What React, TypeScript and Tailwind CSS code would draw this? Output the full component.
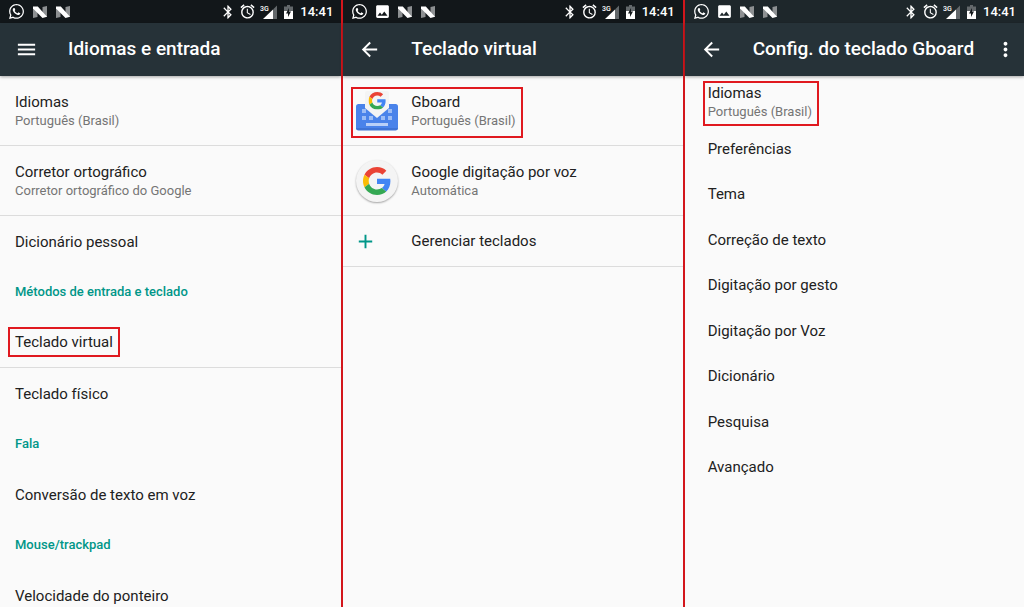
import type { ReactNode } from 'react';
import { clsx } from 'clsx';
import { FaWhatsapp } from 'react-icons/fa';
import { MdAdd, MdAlarm, MdArrowBack, MdBluetooth, MdImage, MdMenu, MdMoreVert } from 'react-icons/md';

const keyboardSettings = [
  'Preferências',
  'Tema',
  'Correção de texto',
  'Digitação por gesto',
  'Digitação por Voz',
  'Dicionário',
  'Pesquisa',
  'Avançado',
];

function NougatIcon() {
  return (
    <svg viewBox="0 0 14 12" className="h-3 w-3.5" aria-hidden="true">
      <path d="M0 1h4.500v10L0 12z" fill="#8d9092" />
      <path d="M9.500 1 14 0v11H9.500z" fill="#8d9092" />
      <path d="M0 .500h4.800L14 10.800 9.500 12 0 2.500z" fill="#fff" />
    </svg>
  );
}

function SignalIcon() {
  return (
    <svg viewBox="0 0 17 14" className="h-3.5 w-[17px]" aria-hidden="true">
      <path d="M17 .500V14h-4V4.500z" fill="#63686b" />
      <path d="M3 14 13 4.500V14z" fill="#fff" />
      <text x="0" y="6" fill="#fff" fontSize="7" fontWeight="500" fontFamily="Roboto, sans-serif">
        3G
      </text>
    </svg>
  );
}

function BatteryIcon() {
  return (
    <svg viewBox="0 0 9 14" className="h-3.5 w-[9px]" aria-hidden="true">
      <path d="M3 0h3v1.500h3V6H0V1.500h3z" fill="#63686b" />
      <path d="M0 6h9v8H0z" fill="#fff" />
      <path d="M5 3 2 8.500h2V12l3-5.500H5z" fill="#12171a" />
    </svg>
  );
}

function GoogleG({ className }: { className?: string }) {
  return (
    <svg viewBox="0 0 48 48" className={className} aria-hidden="true">
      <path fill="#EA4335" d="M24 9.500c3.540 0 6.710 1.220 9.210 3.600l6.850-6.850C35.900 2.380 30.470 0 24 0 14.620 0 6.510 5.380 2.560 13.220l7.980 6.190C12.430 13.720 17.740 9.500 24 9.500z" />
      <path fill="#4285F4" d="M46.980 24.550c0-1.570-.150-3.090-.380-4.550H24v9.020h12.940c-.580 2.960-2.260 5.480-4.780 7.180l7.730 6c4.510-4.180 7.090-10.360 7.090-17.650z" />
      <path fill="#FBBC05" d="M10.530 28.590c-.480-1.450-.760-2.990-.760-4.590s.270-3.140.760-4.590l-7.980-6.190C.920 16.460 0 20.120 0 24c0 3.880.920 7.540 2.560 10.780l7.970-6.190z" />
      <path fill="#34A853" d="M24 48c6.480 0 11.930-2.130 15.890-5.810l-7.730-6c-2.150 1.450-4.920 2.300-8.160 2.300-6.260 0-11.570-4.220-13.470-9.910l-7.980 6.190C6.510 42.620 14.620 48 24 48z" />
    </svg>
  );
}

function GboardIcon() {
  return (
    <svg viewBox="0 0 42 40" className="h-10 w-[42px] shrink-0" aria-hidden="true">
      <rect y="13" width="42" height="26" rx="2.500" fill="#4a83ea" />
      <path d="M0 37v.2A2.500 2.500 0 0 0 2.500 39.500h37a2.500 2.500 0 0 0 2.500-2.300V37z" fill="#3f74d6" />
      <g fill="#9dbdf5">
        <path d="M6 18h4v4H6zM32 18h4v4h-4z" />
        <path d="M6 25h4v4H6zM13 25h4v4h-4zM25 25h4v4h-4zM32 25h4v4h-4z" />
        <path d="M10 32h22v3H10z" fill="#b9d0f8" />
      </g>
      <path d="M9 2a2 2 0 0 1 2-2h20a2 2 0 0 1 2 2v15L21 27 9 17z" fill="#f4f4f4" />
      <svg x="12.500" y="1" width="17.500" height="17.500" viewBox="0 0 48 48">
        <GoogleG />
      </svg>
    </svg>
  );
}

function StatusBar({ screenshot = false, light = false }: { screenshot?: boolean; light?: boolean }) {
  return (
    <div className={clsx('flex h-[23px] items-center justify-between px-2 text-white', light ? 'bg-[#1e272b]' : 'bg-[#12171a]')}>
      <div className="flex items-center gap-[9px]">
        <FaWhatsapp className="-mr-px size-[17px]" />
        {screenshot && <MdImage className="-mx-0.5 size-[17px]" />}
        <NougatIcon />
        <NougatIcon />
      </div>
      <div className="flex items-center gap-[7px]">
        <MdBluetooth className="-mr-1 size-4" />
        <MdAlarm className="-mr-[3px] size-[17px]" />
        <SignalIcon />
        <BatteryIcon />
        <span className="text-[13px] leading-none font-medium">14:41</span>
      </div>
    </div>
  );
}

interface AppBarProps {
  title: string;
  menu?: boolean;
  overflow?: boolean;
}

function AppBar({ title, menu = false, overflow = false }: AppBarProps) {
  return (
    <header className="flex h-[53px] items-center bg-[#263238] pl-[15px] text-white shadow-[0_1px_3px_rgba(0,0,0,0.35)]">
      <button type="button" aria-label={menu ? 'Menu' : 'Voltar'} className="mr-[30px]">
        {menu ? <MdMenu className="size-[23px]" /> : <MdArrowBack className="size-[23px]" />}
      </button>
      <h1 className="text-[19px] font-medium whitespace-nowrap">{title}</h1>
      {overflow && (
        <button type="button" aria-label="Mais opções" className="mr-[7px] ml-auto">
          <MdMoreVert className="size-[23px]" />
        </button>
      )}
    </header>
  );
}

function Label({ title, summary }: { title: string; summary?: string }) {
  return (
    <span className="block text-left whitespace-nowrap">
      <span className="block text-[15px] leading-5 text-[#212121]">{title}</span>
      {summary && <span className="block text-[13px] leading-[18px] text-[#757575]">{summary}</span>}
    </span>
  );
}

interface RowProps {
  title: string;
  summary?: string;
  divider?: boolean;
  highlight?: boolean;
}

function Row({ title, summary, divider = false, highlight = false }: RowProps) {
  return (
    <li className={clsx('flex items-center px-[15px]', summary ? 'h-[70px]' : 'h-[51px]', divider && 'border-b border-[#dcdcdc]')}>
      <button type="button" className={clsx(highlight && '-mx-[7px] h-[30px] border-2 border-[#e0191f] px-[5px]')}>
        <Label title={title} summary={summary} />
      </button>
    </li>
  );
}

function Section({ title, children }: { title: string; children: ReactNode }) {
  return (
    <section>
      <h2 className="flex h-[50px] items-center px-[15px] text-[13px] font-medium text-[#009688]">{title}</h2>
      <ul>{children}</ul>
    </section>
  );
}

function LanguageScreen() {
  return (
    <section className="min-w-0">
      <StatusBar />
      <AppBar title="Idiomas e entrada" menu />
      <ul>
        <Row title="Idiomas" summary="Português (Brasil)" divider />
        <Row title="Corretor ortográfico" summary="Corretor ortográfico do Google" divider />
        <Row title="Dicionário pessoal" />
      </ul>
      <Section title="Métodos de entrada e teclado">
        <Row title="Teclado virtual" divider highlight />
        <Row title="Teclado físico" />
      </Section>
      <Section title="Fala">
        <Row title="Conversão de texto em voz" />
      </Section>
      <Section title="Mouse/trackpad">
        <Row title="Velocidade do ponteiro" />
      </Section>
    </section>
  );
}

function VirtualKeyboardScreen() {
  return (
    <section className="min-w-0 border-l-2 border-[#d3161c]">
      <StatusBar screenshot />
      <AppBar title="Teclado virtual" />
      <ul>
        <li className="flex h-[70px] items-center border-b border-[#dcdcdc] px-2 pt-[3px]">
          <button type="button" className="flex h-[51px] items-center gap-[13px] border-2 border-[#e0191f] pr-[5px] pb-0.5 pl-[3px]">
            <GboardIcon />
            <Label title="Gboard" summary="Português (Brasil)" />
          </button>
        </li>
        <li className="flex h-[70px] items-center border-b border-[#dcdcdc] px-[13px]">
          <button type="button" className="flex items-center gap-[13px]">
            <span className="grid size-[42px] place-items-center rounded-full bg-[#f4f4f4] shadow-[0_1px_2px_rgba(0,0,0,0.35)]">
              <GoogleG className="size-7" />
            </span>
            <Label title="Google digitação por voz" summary="Automática" />
          </button>
        </li>
        <li className="flex h-[51px] items-center border-b border-[#dcdcdc] px-[11px]">
          <button type="button" className="flex items-center">
            <MdAdd className="mr-[34px] size-[23px] text-[#009688]" />
            <Label title="Gerenciar teclados" />
          </button>
        </li>
      </ul>
    </section>
  );
}

function GboardScreen() {
  return (
    <section className="min-w-0 border-l-2 border-[#d3161c]">
      <StatusBar screenshot light />
      <AppBar title="Config. do teclado Gboard" overflow />
      <div className="px-[18px] pt-[5px]">
        <button type="button" className="block h-[45px] border-2 border-[#e0191f] pr-[5px] pb-1 pl-[3px]">
          <Label title="Idiomas" summary="Português (Brasil)" />
        </button>
      </div>
      <ul className="grid h-[364px] auto-rows-fr px-[23px]">
        {keyboardSettings.map((setting) => (
          <li key={setting} className="flex items-center">
            <button type="button">
              <Label title={setting} />
            </button>
          </li>
        ))}
      </ul>
    </section>
  );
}

export default function App() {
  return (
    <main className="grid h-screen grid-cols-3 overflow-hidden bg-[#fafafa] font-[Roboto,sans-serif]">
      <LanguageScreen />
      <VirtualKeyboardScreen />
      <GboardScreen />
    </main>
  );
}
